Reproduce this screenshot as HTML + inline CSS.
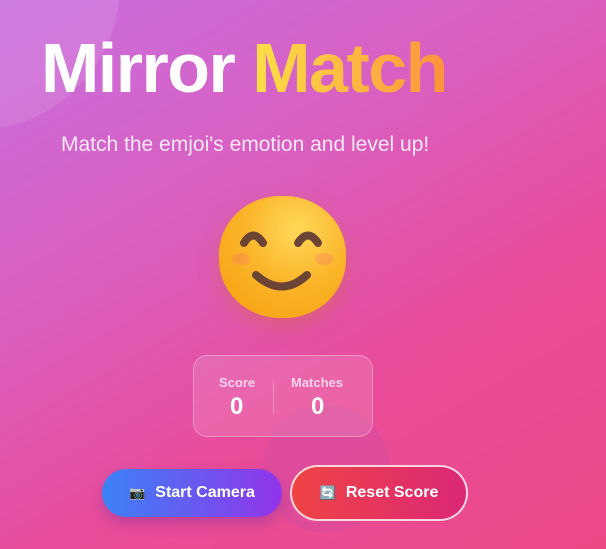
<!DOCTYPE html>
<html><head><meta charset="utf-8"><style>
html,body{margin:0;padding:0;width:606px;height:549px;overflow:hidden}
body{background:linear-gradient(150deg,#c86fe0 0%,#d95fc0 35%,#e94c9a 65%,#ec4a86 100%);font-family:"Liberation Sans",sans-serif;position:relative}
.circ{position:absolute;left:-170px;top:-160px;width:290px;height:290px;border-radius:50%;background:rgba(255,255,255,0.1)}
.circ2{position:absolute;left:262px;top:405px;width:128px;height:128px;border-radius:50%;background:rgba(180,80,180,0.18)}
h1{position:absolute;left:41px;top:28px;margin:0;font-size:70px;font-weight:bold;letter-spacing:-1.5px;color:#fff;white-space:nowrap;line-height:80px}
h1 span{background:linear-gradient(90deg,#fde047,#fb923c);-webkit-background-clip:text;color:transparent}
.sub{position:absolute;left:61px;top:133px;font-size:21px;color:#fbe7f5;white-space:nowrap}
.face{position:absolute;left:219px;top:196px;width:127px;height:122px;border-radius:48%;background:radial-gradient(circle at 62% 28%,#ffd95a,#fbb52a 45%,#f59e0b 100%);box-shadow:0 8px 20px rgba(200,120,40,.35)}
.stats{position:absolute;left:193px;top:355px;width:178px;height:80px;border:1px solid rgba(255,255,255,.3);border-radius:14px;background:rgba(255,255,255,.13)}
.lab{position:absolute;top:19px;font-size:13px;font-weight:bold;color:#fbd3ea}
.val{position:absolute;top:37px;font-size:24px;font-weight:bold;color:#fff}
.div{position:absolute;left:79px;top:25px;width:1px;height:32px;background:rgba(255,255,255,.3)}
.btn{position:absolute;border-radius:30px;color:#fff;font-weight:bold;font-size:16px;display:flex;align-items:center;justify-content:center;gap:10px}
.b1{left:102px;top:469px;width:180px;height:48px;background:linear-gradient(90deg,#3b82f6,#9333ea);box-shadow:0 6px 14px rgba(80,40,160,.3)}
.b2{left:290px;top:465px;width:174px;height:52px;border:2px solid rgba(255,255,255,.8);background:linear-gradient(90deg,#ef4444,#db2777)}
</style></head><body>
<div class="circ"></div><div class="circ2"></div>
<h1>Mirror <span>Match</span></h1>
<div class="sub">Match the emjoi's emotion and level up!</div>
<div class="face">
<svg width="127" height="122" viewBox="0 0 127 122" style="position:absolute;left:0;top:0">
<ellipse cx="22" cy="63" rx="9" ry="6" fill="#f87171" opacity=".3"/>
<ellipse cx="105" cy="63" rx="9" ry="6" fill="#f87171" opacity="0.3"/>
<path d="M25 47 Q34 32 44 47" stroke="#6b4436" stroke-width="8" fill="none" stroke-linecap="round"/>
<path d="M79 47 Q89 32 99 47" stroke="#6b4436" stroke-width="8" fill="none" stroke-linecap="round"/>
<path d="M37 79 Q63 102 88 79" stroke="#6b4436" stroke-width="8" fill="none" stroke-linecap="round"/>
</svg></div>
<div class="stats">
<div class="lab" style="left:25px">Score</div><div class="val" style="left:36px">0</div>
<div class="div"></div>
<div class="lab" style="left:97px">Matches</div><div class="val" style="left:117px">0</div>
</div>
<div class="btn b1"><span style="font-size:13px">📷</span>Start Camera</div>
<div class="btn b2"><span style="font-size:13px">🔄</span>Reset Score</div>
</body></html>
